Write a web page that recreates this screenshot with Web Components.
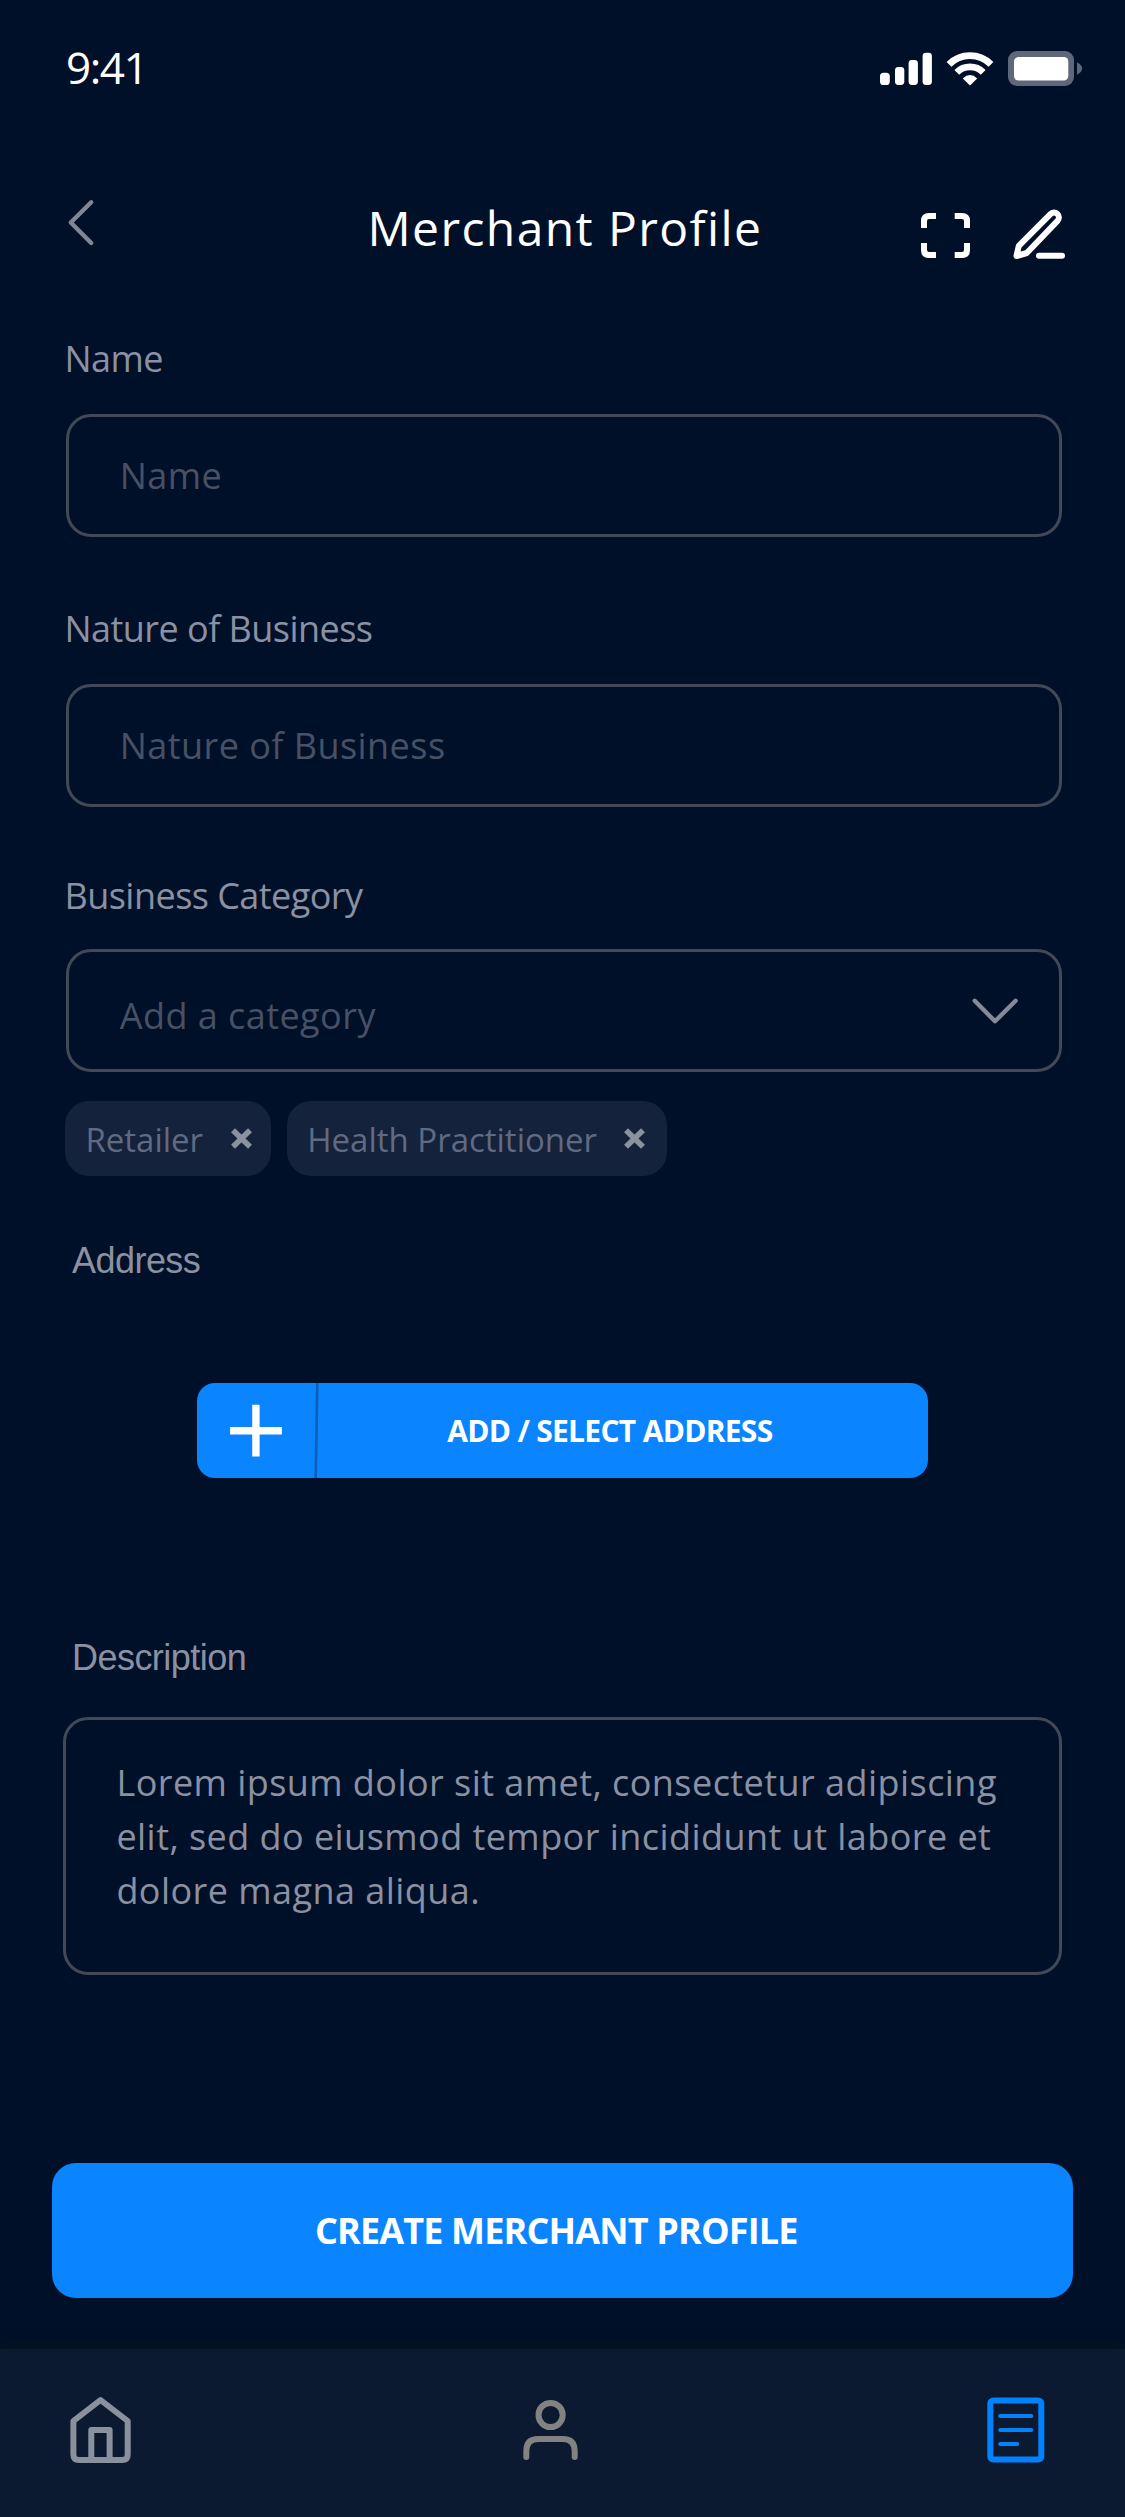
<!DOCTYPE html>
<html lang="en">
<head>
<meta charset="utf-8">
<title>Merchant Profile</title>
<style>
  html, body { margin: 0; background: #001028; }
  body { width: 1125px; height: 2517px; overflow: hidden; font-family: "Open Sans", "Noto Sans", sans-serif; color: #fff; }
</style>
</head>
<body>
<merchant-screen></merchant-screen>
<script>
  const define = (name, html) => {
    const tpl = document.createElement('template');
    tpl.innerHTML = html;
    customElements.define(name, class extends HTMLElement {
      constructor() {
        super();
        this.attachShadow({ mode: 'open' }).appendChild(tpl.content.cloneNode(true));
      }
    });
  };

  define('status-bar', `
    <style>
      :host { display: flex; height: 100px; box-sizing: border-box; padding: 0 41px 0 66px; justify-content: space-between; }
      time { font-size: 44px; line-height: 60px; letter-spacing: -1.5px; margin-top: 37px; }
      svg { display: block; margin-top: 48px; }
    </style>
    <time>9:41</time>
    <svg width="206" height="42" viewBox="878 48 206 42" fill="#fff">
      <rect x="880" y="72.7" width="9.8" height="12.3" rx="3.6"/>
      <rect x="895" y="67" width="9.3" height="18" rx="3.4"/>
      <rect x="908.6" y="60" width="9.3" height="25" rx="3.4"/>
      <rect x="922.6" y="52.7" width="9.3" height="32.3" rx="3.4"/>
      <path d="M949 64.3a29.7 29.7 0 0 1 42 0M956.8 72.3a18.7 18.7 0 0 1 26.4 0" fill="none" stroke="#fff" stroke-width="6.8"/>
      <path d="M970 85.6L962.8 78.4Q970 71.8 977.2 78.4Z"/>
      <rect x="1008" y="51" width="66" height="35" rx="9" fill="#5f677a"/>
      <rect x="1014" y="57" width="54.3" height="23.5" rx="4.5"/>
      <path d="M1077 62.3q5.2 3 5.2 6.2t-5.2 6.2z" fill="#5f677a"/>
    </svg>`);

  define('page-header', `
    <style>
      :host { display: flex; height: 233px; box-sizing: border-box; padding: 0 57px 0 66px; align-items: flex-start; }
      svg { display: block; fill: none; stroke-width: 6; }
      .back { margin-top: 97px; }
      h1 { margin: 98px 0 0 271.5px; font-size: 48px; line-height: 60px; font-weight: 400; letter-spacing: 1.4px; white-space: nowrap; }
      .tools { margin: 105px 0 0 auto; }
    </style>
    <svg class="back" width="30" height="51" viewBox="66 197 30 51"><path d="M91.2 202.3L70.8 222.5L91.2 243" stroke="#808693" stroke-width="4.4" stroke-linecap="round" stroke-linejoin="round"/></svg>
    <h1><slot></slot></h1>
    <svg class="tools" width="150" height="60" viewBox="918 205 150 60" stroke="#fff">
      <path d="M924 228V221Q924 216 929 216H936M954.7 216H962Q967 216 967 221V228M967 243V250Q967 255 962 255H954.7M936 255H929Q924 255 924 250V243"/>
      <path d="M1016.5 256L1018.8 245.8L1050.4 214.1A4.9 4.9 0 0 1 1057.5 220.9L1026.8 253Z" stroke-linejoin="round"/>
      <path d="M1039 255.7H1062" stroke-linecap="round"/>
    </svg>`);

  define('field-label', `
    <style>
      :host { display: block; height: 50px; line-height: 50px; font-size: 36px; letter-spacing: -0.54px; color: #8b90a2; margin-left: 64.5px; white-space: nowrap; }
      :host([plain]) { font-family: "Liberation Sans", Arial, sans-serif; margin-left: 72px; }
      span { display: block; padding-top: 1px; }
      :host([plain]) span { padding-top: 0; }
    </style><span><slot></slot></span>`);

  define('text-field', `
    <style>
      :host { display: flex; align-items: center; justify-content: space-between; box-sizing: border-box; height: 123px; margin: 0 63px 0 66px; padding: 0 39.3px 0 50.8px; border: 3px solid #414957; border-radius: 25px; font-size: 36px; letter-spacing: .45px; color: #475065; }
    </style><slot></slot><slot name="icon"></slot>`);

  define('chevron-icon', `
    <style>:host { display: block; } svg { display: block; }</style>
    <svg width="50" height="30" viewBox="970 996 50 30" fill="none"><path d="M974.7 1000.8L995 1021.3L1015.6 1000.8" stroke="#848a96" stroke-width="4.4" stroke-linecap="round" stroke-linejoin="round"/></svg>`);

  define('category-chip', `
    <style>
      :host { display: flex; align-items: center; justify-content: space-between; box-sizing: border-box; height: 75px; padding: 0 18.5px 0 20.6px; border-radius: 24px; background: #14223b; color: #606a82; font-size: 33px; line-height: 50px; }
      span { padding-top: 2px; white-space: nowrap; }
      svg { display: block; }
    </style>
    <span><slot></slot></span>
    <svg width="23" height="23" viewBox="-11.5 -11.5 23 23" fill="none" stroke="#8a919f" stroke-width="5.6"><path d="M-8.5 -8.3L8.5 8.3M8.5 -8.3L-8.5 8.3"/></svg>`);

  define('address-button', `
    <style>
      :host { display: flex; box-sizing: border-box; width: 731.8px; height: 95.2px; border-radius: 18px; background: #0b84ff; overflow: hidden; }
      svg { display: block; flex: none; }
      span { flex: 1; text-align: center; padding-right: 28px; font-size: 30px; line-height: 95px; font-weight: 700; letter-spacing: -.7px; white-space: nowrap; }
    </style>
    <svg width="123" height="95.2" viewBox="196.5 1382.5 123 95.2" fill="none">
      <path d="M255.4 1404.3V1456M229.6 1430.2H281.4" stroke="#fff" stroke-width="7.4"/>
      <path d="M316.8 1382L315.2 1478" stroke="#0a5fb9" stroke-width="2.6"/>
    </svg>
    <span><slot></slot></span>`);

  define('description-box', `
    <style>
      :host { display: block; box-sizing: border-box; height: 258px; margin: 0 63px; padding: 36px 38px 0 50.4px; border: 3px solid #414957; border-radius: 25px; font-size: 36px; line-height: 54px; letter-spacing: .45px; color: #8b90a2; }
    </style><slot></slot>`);

  define('primary-button', `
    <style>
      :host { display: block; box-sizing: border-box; margin: 0 52.3px 0 52.3px; height: 135px; padding-right: 12.5px; border-radius: 24px; background: #0b84ff; text-align: center; font-size: 36px; line-height: 136px; font-weight: 700; letter-spacing: -.84px; }
    </style><slot></slot>`);

  define('tab-bar', `
    <style>
      :host { display: flex; justify-content: space-between; align-items: flex-start; box-sizing: border-box; height: 168px; padding: 45px 78px 0 68px; background: #0b1a30; box-shadow: 0 0 14px #0c1a16; }
      svg { display: block; fill: none; stroke-width: 6; stroke-linejoin: round; stroke-linecap: round; }
      .person { margin-right: 23px; }
    </style>
    <svg width="66" height="72" viewBox="68 2394 66 72" stroke="#8a919e"><path d="M100.5 2400L73.4 2421V2454.5Q73.4 2460 78.9 2460H122.2Q127.7 2460 127.7 2454.5V2421ZM91.3 2459V2430H109.6V2459"/></svg>
    <svg class="person" width="60" height="72" viewBox="518 2394 60 72" stroke="#828282"><circle cx="550.6" cy="2415" r="12.1"/><path d="M526.3 2457V2451Q526.3 2439 538.3 2439H562.7Q574.7 2439 574.7 2451V2457"/></svg>
    <svg width="62" height="72" viewBox="985 2394 62 72" stroke="#0382ff"><rect x="990.3" y="2400.4" width="51" height="59" rx="3"/><path d="M1000.2 2416H1031.2M1000.2 2430H1031.2M1000.2 2444H1017.2" stroke-width="4"/></svg>`);

  define('merchant-screen', `
    <style>
      :host { display: flex; flex-direction: column; height: 2517px; }
      :host > * { flex: none; }
      .chips { display: flex; gap: 15.3px; margin: 29px 0 0 64.8px; }
      address-button { margin: 97px 0 0 196.5px; }
      tab-bar { margin-top: auto; }
    </style>
    <status-bar></status-bar>
    <page-header>Merchant Profile</page-header>
    <field-label>Name</field-label>
    <text-field style="margin-top:31px">Name</text-field>
    <field-label style="margin-top:66px">Nature of Business</field-label>
    <text-field style="margin-top:31px">Nature of Business</text-field>
    <field-label style="margin-top:63px">Business Category</field-label>
    <text-field style="margin-top:29px"><span style="padding-top:9px">Add a category</span><chevron-icon slot="icon"></chevron-icon></text-field>
    <div class="chips">
      <category-chip style="width:206.5px">Retailer</category-chip>
      <category-chip style="width:380.6px;padding-right:21px">Health Practitioner</category-chip>
    </div>
    <field-label plain style="margin-top:59.5px">Address</field-label>
    <address-button>ADD / SELECT ADDRESS</address-button>
    <field-label plain style="margin-top:155px">Description</field-label>
    <description-box style="margin-top:34px">Lorem ipsum dolor sit amet, consectetur adipiscing elit, sed do eiusmod tempor incididunt ut labore et dolore magna aliqua.</description-box>
    <primary-button style="margin-top:188px">CREATE MERCHANT PROFILE</primary-button>
    <tab-bar></tab-bar>`);
</script>
</body>
</html>
